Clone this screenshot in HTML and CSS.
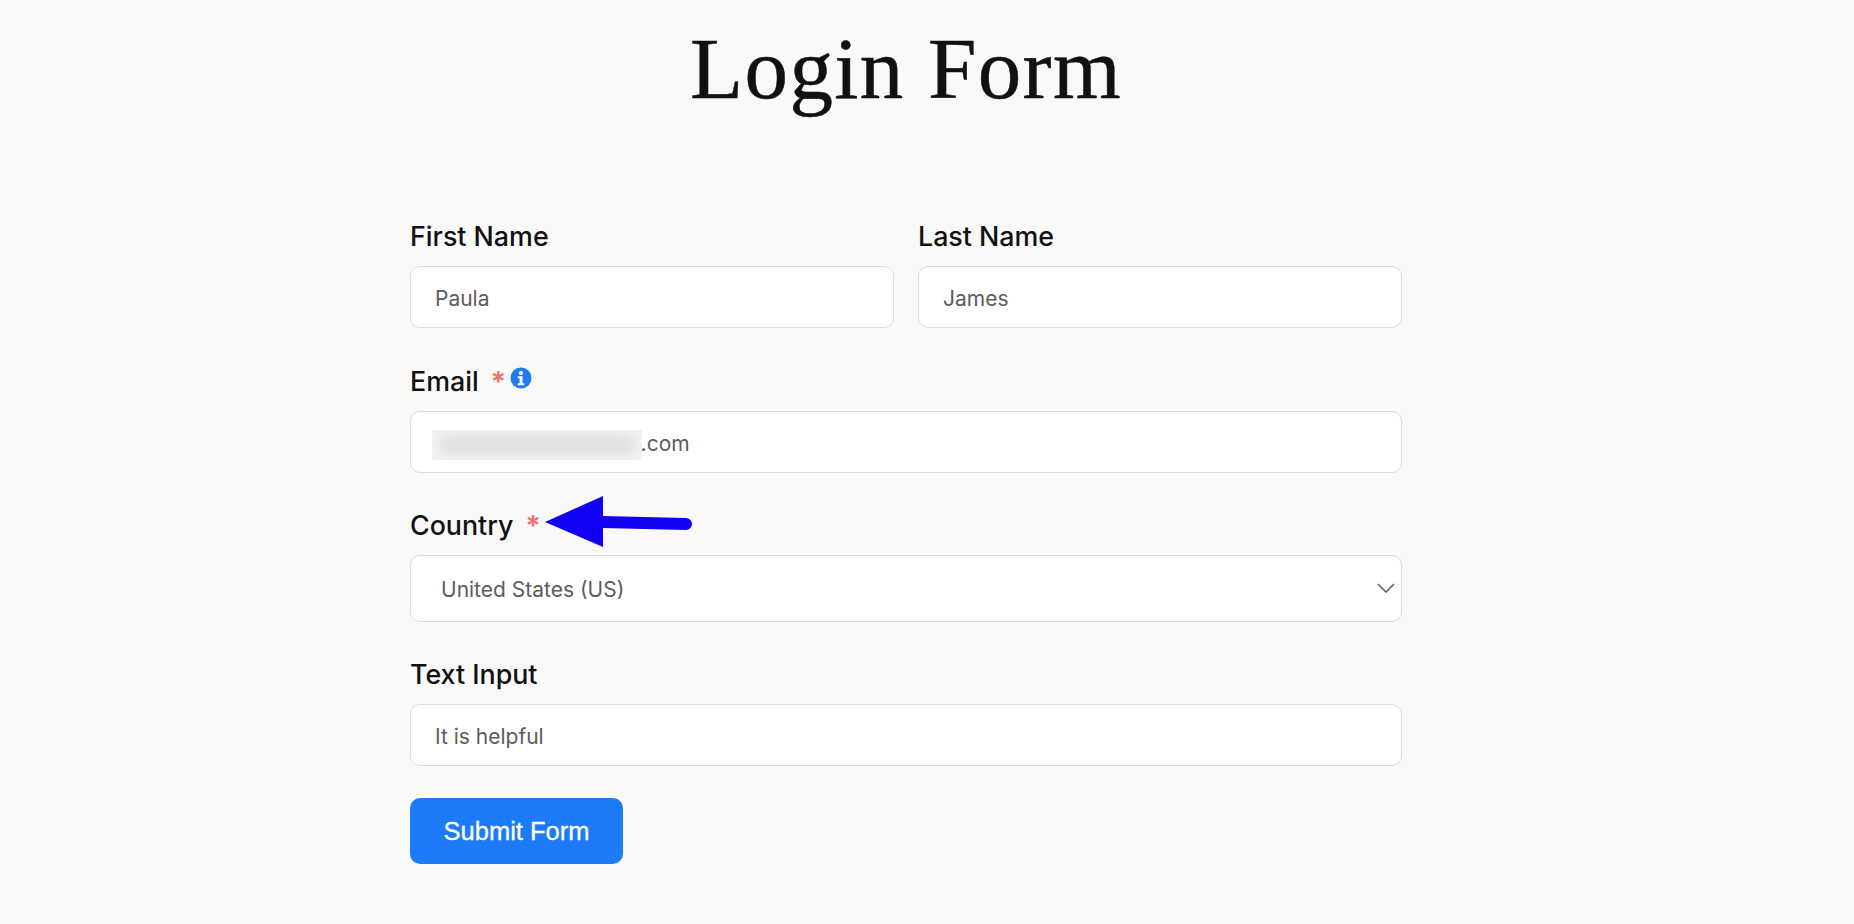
FILE: index.html
```html
<!DOCTYPE html>
<html lang="en">
<head>
<meta charset="utf-8">
<title>Login Form</title>
<link rel="stylesheet" href="styles.css">
</head>
<body>
<main class="page">
  <h1 class="title">Login Form</h1>
  <form class="form">
    <div class="row">
      <div class="field">
        <div class="label">First Name</div>
        <div class="input">Paula</div>
      </div>
      <div class="field">
        <div class="label">Last Name</div>
        <div class="input">James</div>
      </div>
    </div>
    <div class="field">
      <div class="label">Email <span class="req">*</span>
        <svg class="info" viewBox="0 0 22 22" width="22" height="22"><circle cx="11" cy="11" r="10.500" fill="#1e7bf0"/><circle cx="11" cy="6" r="2.100" fill="#fff"/><path d="M7.800 9.200h4.700v7h1.800v2H7.800v-2h1.800v-5H7.800z" fill="#fff"/></svg>
      </div>
      <div class="input"><span class="email-text">r.com</span><span class="smudge"></span></div>
    </div>
    <div class="field">
      <div class="label">Country <span class="req">*</span>
        <svg class="arrow" viewBox="0 0 150 52" width="150" height="52"><path d="M0 26 58 0V20L141 22a6 6 0 0 1 0 12L58 32V51z" fill="#1200f5"/></svg>
      </div>
      <div class="input select">United States (US)
        <svg class="chev" viewBox="0 0 18 10" width="18" height="10"><path d="M1 1l8 8 8-8" fill="none" stroke="#5f5f5f" stroke-width="1.600"/></svg>
      </div>
    </div>
    <div class="field">
      <div class="label">Text Input</div>
      <div class="input">It is helpful</div>
    </div>
    <button class="submit" type="button">Submit Form</button>
  </form>
</main>
</body>
</html>
```
FILE: styles.css
```css
* { box-sizing: border-box; }
html, body { margin: 0; height: 100%; }
body {
  background: #f9f9f9;
  font-family: Inter, "Liberation Sans", sans-serif;
  color: #111;
  overflow: hidden;
}
.page { display: flex; flex-direction: column; align-items: center; padding-right: 42px; }
.title {
  margin: 0;
  height: 216px;
  padding-top: 19px;
  font: 400 87px/100px "Liberation Serif", serif;
  letter-spacing: 1.400px;
  -webkit-text-stroke: 0.500px #111;
  color: #111;
}
.form { width: 992px; display: flex; flex-direction: column; }
.row { display: flex; gap: 24px; margin-bottom: 1px; }
.row .field { flex: 1; }
.field { display: flex; flex-direction: column; margin-bottom: 32px; }
.label {
  position: relative;
  display: flex;
  align-items: center;
  height: 40px;
  margin-bottom: 10px;
  font-size: 26.800px;
  font-weight: 500;
  color: #111;
}
.req { color: #f0706c; margin-left: 12px; font-size: 28px; font-weight: 600; position: relative; top: 1px; }
.info { margin-left: 4px; position: relative; top: -3px; }
.arrow { position: absolute; left: 135px; top: -9px; }
.input {
  position: relative;
  display: flex;
  align-items: center;
  height: 62px;
  padding: 2px 24px 0;
  background: #fff;
  border: 1px solid #dcdcdc;
  border-radius: 10px;
  font-size: 21px;
  color: #5c5c5c;
}
.smudge {
  position: absolute;
  left: 21px;
  top: 18px;
  width: 210px;
  height: 30px;
  overflow: hidden;
  background: #f3f3f3;
}
.smudge::before {
  content: "";
  position: absolute;
  inset: 6px 8px 6px 8px;
  background: #dfdfdf;
  filter: blur(6px);
}
.email-text { position: absolute; left: 223px; }
.select { height: 67px; padding-left: 30px; }
.chev { position: absolute; right: 6px; top: 27px; }
.submit {
  width: 213px;
  height: 66px;
  background: #1e7bf8;
  border: 0;
  border-radius: 10px;
  color: #fff;
  -webkit-text-stroke: 0.300px #fff;
  font: 500 25.500px "Liberation Sans", sans-serif;
}
```
